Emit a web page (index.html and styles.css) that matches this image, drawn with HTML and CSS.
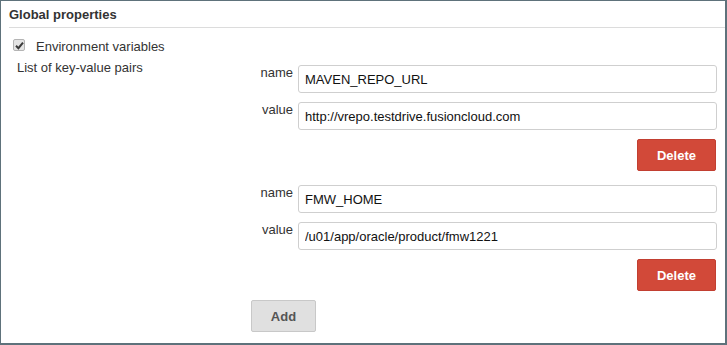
FILE: index.html
```html
<!DOCTYPE html>
<html lang="en">
<head>
    <meta charset="UTF-8">
    <meta name="viewport" content="width=device-width, initial-scale=1.0">
    <title>Global properties</title>
    <link rel="stylesheet" href="styles.css">
</head>
<body>
    <div class="frame">
        <div class="section-header">Global properties</div>
        <div class="option">
            <span class="checkbox">
                <svg width="9" height="9" viewBox="0 0 9 9"><path d="M1 4.8 L3.4 7.2 L8 1.6" fill="none" stroke="#3a3a3a" stroke-width="2"/></svg>
            </span>
            <label>Environment variables</label>
        </div>
        <div class="kv-section">
            <div class="kv-desc">List of key-value pairs</div>
            <div class="kv-list">
                <div class="kv-entry">
                    <label>name</label>
                    <input type="text" value="MAVEN_REPO_URL">
                    <label>value</label>
                    <input type="text" value="http://vrepo.testdrive.fusioncloud.com">
                    <button class="btn-delete">Delete</button>
                </div>
                <div class="kv-entry">
                    <label>name</label>
                    <input type="text" value="FMW_HOME">
                    <label>value</label>
                    <input type="text" value="/u01/app/oracle/product/fmw1221">
                    <button class="btn-delete">Delete</button>
                </div>
                <button class="btn-add">Add</button>
            </div>
        </div>
    </div>
</body>
</html>
```

FILE: styles.css
```css
body {
    margin: 0;
    padding: 0;
    font-family: "Liberation Sans", Arial, sans-serif;
    font-size: 13px;
    line-height: 15px;
    color: #333;
    background-color: #fff;
}
.frame {
    box-sizing: border-box;
    width: 727px;
    height: 345px;
    border-style: solid;
    border-color: #5e727b;
    border-width: 1px 2px 2px 1px;
    background-color: #fff;
}
.section-header {
    margin-left: 8px;
    padding: 6px 0 5px;
    font-weight: bold;
    border-bottom: 1px solid #dcdcdc;
}
.option {
    display: flex;
    align-items: flex-start;
    margin-top: 11px;
    padding-left: 12px;
}
.checkbox {
    box-sizing: border-box;
    display: flex;
    align-items: center;
    justify-content: center;
    width: 12px;
    height: 12px;
    margin-right: 11px;
    border: 1px solid #b4b4b4;
    border-radius: 2px;
    background-color: #e4e4e4;
}
.kv-section {
    display: flex;
    margin-top: 6px;
}
.kv-desc {
    box-sizing: border-box;
    width: 250px;
    padding-left: 16px;
}
.kv-list {
    flex: 1;
    padding-top: 5px;
    padding-right: 8px;
}
.kv-entry {
    display: grid;
    grid-template-columns: 42px 1fr;
    column-gap: 5px;
    row-gap: 9px;
}
.kv-entry + .kv-entry {
    margin-top: 14px;
}
.kv-entry label {
    text-align: right;
}
.kv-entry input {
    box-sizing: border-box;
    height: 28px;
    padding: 0 6px;
    border: 1px solid #cfcfcf;
    border-radius: 3px;
    font-family: "Liberation Sans", Arial, sans-serif;
    font-size: 13px;
    color: #111;
}
.btn-delete {
    grid-column: 2;
    justify-self: end;
    width: 79px;
    height: 32px;
    margin-right: 1px;
    border: 1px solid #c23f31;
    border-radius: 2px;
    background-color: #d24939;
    color: #fff;
    font-family: "Liberation Sans", Arial, sans-serif;
    font-size: 13px;
    font-weight: bold;
}
.btn-add {
    display: block;
    width: 65px;
    height: 32px;
    margin-top: 9px;
    border: 1px solid #c8c8c8;
    border-radius: 2px;
    background-color: #e0e0e0;
    color: #555;
    font-family: "Liberation Sans", Arial, sans-serif;
    font-size: 13px;
    font-weight: bold;
}
```
